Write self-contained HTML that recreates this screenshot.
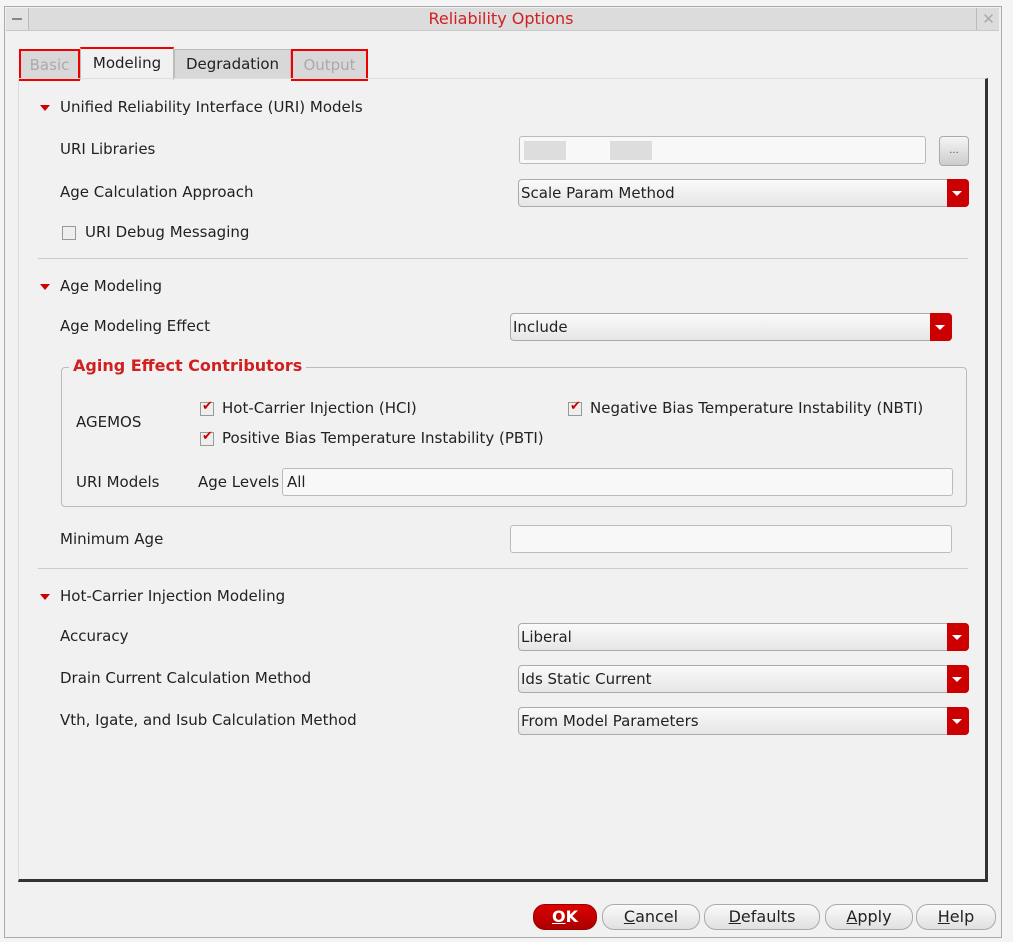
<!DOCTYPE html>
<html><head><style>
body{margin:0;width:1013px;height:942px;background:#f4f4f4;font-family:"DejaVu Sans","Liberation Sans",sans-serif;font-size:15px;color:#222;position:relative;overflow:hidden}
.a{position:absolute;white-space:nowrap}
.win{left:4px;top:6px;width:996px;height:930px;border:1px solid #aaa;background:#f1f1f1}
.title{left:6px;top:8px;width:993px;height:22px;background:#dcdcdc;border-bottom:1px solid #c8c8c8}
.tab{top:49px;height:28px;line-height:28px;text-align:center;background:#d8d8d8;border:1px solid #bbb;font-size:15px}
.panel{left:18px;top:78px;width:966px;height:800px;border-right:3px solid #333;border-bottom:3px solid #333;border-top:1px solid #ddd;border-left:1px solid #ddd}
.tri{width:0;height:0;border-left:5px solid transparent;border-right:5px solid transparent;border-top:6px solid #c00}
.dd{height:26px;line-height:26px;border:1px solid #aaa;border-radius:4px;background:linear-gradient(#fafafa,#e6e6e6);padding-left:2px}
.dd::after{content:"";position:absolute;right:-1px;top:-1px;width:22px;height:28px;background:#c00;border-radius:0 4px 4px 0}
.dd i{position:absolute;right:6px;top:11px;width:0;height:0;border-left:5px solid transparent;border-right:5px solid transparent;border-top:5px solid #fff;z-index:2}
.field{height:26px;border:1px solid #bbb;border-radius:3px;background:#f8f8f8}
.hr{height:1px;background:#ccc;left:38px;width:930px}
.cb{width:12px;height:12px;border:1px solid #999;background:#eee}
.cb.c::after{content:"✔";color:#c00;position:absolute;left:1px;top:-4px;font-size:13px}
.btn{top:904px;height:24px;line-height:24px;text-align:center;border:1px solid #aaa;border-radius:12px;background:linear-gradient(#fafafa,#e0e0e0);font-size:16px}
u{text-decoration:underline}
</style></head><body>
<div class="a win"></div>
<div class="a title"></div>
<div class="a" style="left:6px;top:8px;width:22px;height:22px;border-right:1px solid #bbb;background:#e2e2e2"></div>
<div class="a" style="left:12px;top:18px;width:10px;height:2px;background:#888"></div>
<div class="a" style="left:976px;top:8px;width:23px;height:22px;border-left:1px solid #bbb;color:#aaa;text-align:center;line-height:22px">✕</div>
<div class="a" style="left:0;width:1002px;top:9px;text-align:center;color:#d02020;font-size:16px">Reliability Options</div>

<div class="a tab" style="left:19px;width:57px;color:#aaa;border:2px solid #e00">Basic</div>
<div class="a tab" style="left:80px;top:47px;width:92px;height:31px;background:#f1f1f1;border-top:2px solid #e00;border-bottom:none;color:#222">Modeling</div>
<div class="a tab" style="left:174px;width:115px">Degradation</div>
<div class="a tab" style="left:291px;width:73px;color:#aaa;border:2px solid #e00">Output</div>
<div class="a panel"></div>

<div class="a tri" style="left:40px;top:105px"></div>
<div class="a" style="left:60px;top:98px">Unified Reliability Interface (URI) Models</div>
<div class="a" style="left:60px;top:140px">URI Libraries</div>
<div class="a field" style="left:519px;top:136px;width:405px"><div class="a" style="left:4px;top:4px;width:42px;height:19px;background:#ddd"></div><div class="a" style="left:90px;top:4px;width:42px;height:19px;background:#ddd"></div></div>
<div class="a" style="left:939px;top:136px;width:28px;height:28px;border:1px solid #aaa;border-radius:4px;background:linear-gradient(#f5f5f5,#ccc);text-align:center;font-size:10px;line-height:28px;color:#555">...</div>
<div class="a" style="left:60px;top:183px">Age Calculation Approach</div>
<div class="a dd" style="left:518px;top:179px;width:447px">Scale Param Method<i></i></div>
<div class="a cb" style="left:62px;top:226px"></div>
<div class="a" style="left:85px;top:223px">URI Debug Messaging</div>
<div class="a hr" style="top:258px"></div>

<div class="a tri" style="left:40px;top:284px"></div>
<div class="a" style="left:60px;top:277px">Age Modeling</div>
<div class="a" style="left:60px;top:317px">Age Modeling Effect</div>
<div class="a dd" style="left:510px;top:313px;width:438px">Include<i></i></div>
<div class="a" style="left:61px;top:367px;width:904px;height:138px;border:1px solid #bbb;border-radius:4px"></div>
<div class="a" style="left:69px;top:356px;background:#f1f1f1;padding:0 4px;color:#d02020;font-weight:bold;font-size:16px">Aging Effect Contributors</div>
<div class="a" style="left:76px;top:413px">AGEMOS</div>
<div class="a cb c" style="left:200px;top:402px"></div>
<div class="a" style="left:222px;top:399px">Hot-Carrier Injection (HCI)</div>
<div class="a cb c" style="left:568px;top:402px"></div>
<div class="a" style="left:590px;top:399px">Negative Bias Temperature Instability (NBTI)</div>
<div class="a cb c" style="left:200px;top:432px"></div>
<div class="a" style="left:222px;top:429px">Positive Bias Temperature Instability (PBTI)</div>
<div class="a" style="left:76px;top:473px">URI Models</div>
<div class="a" style="left:198px;top:473px">Age Levels</div>
<div class="a field" style="left:282px;top:468px;width:669px"><span class="a" style="left:4px;top:4px">All</span></div>
<div class="a" style="left:60px;top:530px">Minimum Age</div>
<div class="a field" style="left:510px;top:525px;width:440px"></div>
<div class="a hr" style="top:568px"></div>

<div class="a tri" style="left:40px;top:594px"></div>
<div class="a" style="left:60px;top:587px">Hot-Carrier Injection Modeling</div>
<div class="a" style="left:60px;top:627px">Accuracy</div>
<div class="a dd" style="left:518px;top:623px;width:447px">Liberal<i></i></div>
<div class="a" style="left:60px;top:669px">Drain Current Calculation Method</div>
<div class="a dd" style="left:518px;top:665px;width:447px">Ids Static Current<i></i></div>
<div class="a" style="left:60px;top:711px">Vth, Igate, and Isub Calculation Method</div>
<div class="a dd" style="left:518px;top:707px;width:447px">From Model Parameters<i></i></div>

<div class="a btn" style="left:533px;width:62px;background:linear-gradient(#d00,#a00);border-color:#900;color:#fff;font-weight:bold"><u>O</u>K</div>
<div class="a btn" style="left:602px;width:96px"><u>C</u>ancel</div>
<div class="a btn" style="left:704px;width:114px"><u>D</u>efaults</div>
<div class="a btn" style="left:825px;width:86px"><u>A</u>pply</div>
<div class="a btn" style="left:916px;width:78px"><u>H</u>elp</div>
</body></html>
